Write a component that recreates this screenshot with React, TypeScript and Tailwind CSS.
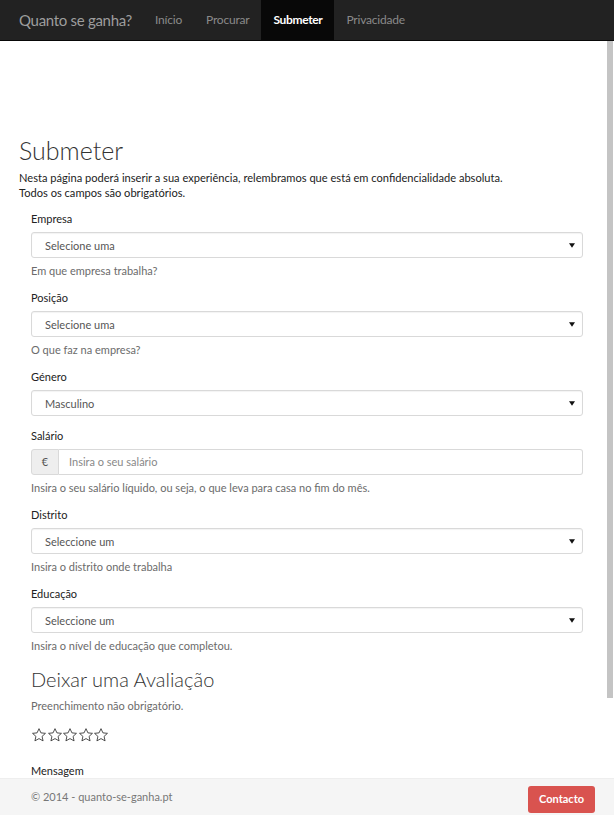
import React from "react";

const Caret = () => (
  <svg width="6" height="5" viewBox="0 0 6 5" className="absolute right-[7px] top-[10px]">
    <path d="M0 0.3 L6 0.3 L3 4.8 Z" fill="#111" />
  </svg>
);

const Select = ({ value }: { value: string }) => (
  <div className="relative h-[26px] w-full rounded-[3px] border border-[#d9d9d9] bg-white shadow-[inset_0_1px_1px_rgba(0,0,0,0.05)]">
    <div className="pl-[13px] pt-[4px] text-[11px] leading-[17px] text-[#555]">{value}</div>
    <Caret />
  </div>
);

const Field = ({
  label,
  children,
  help,
}: {
  label: string;
  children: React.ReactNode;
  help?: string;
}) => (
  <div className="mb-[11px]">
    <div className="mb-[5px] text-[11px] leading-[17px] text-[#222]">{label}</div>
    {children}
    {help && (
      <div className="mt-[5px] text-[11px] leading-[15px] text-[#6b6b6b]">{help}</div>
    )}
  </div>
);

const Star = () => (
  <svg width="16" height="16" viewBox="0 0 24 24" className="-mr-[0.5px]">
    <path
      d="M12 2.5l2.9 6.3 6.8.7-5.1 4.6 1.5 6.7L12 17.4 5.9 20.8l1.5-6.7-5.1-4.6 6.8-.7z"
      fill="none"
      stroke="#333"
      strokeWidth="1.3"
      strokeLinejoin="miter"
    />
  </svg>
);

export default function App() {
  const navItems = ["Início", "Procurar", "Submeter", "Privacidade"];
  return (
    <div className="min-h-[815px] bg-white font-['Lato','Open_Sans',sans-serif] text-[#222]">
      <nav className="flex h-[41px] items-stretch border-b border-[#080808] bg-[#222]">
        <div className="flex items-center pl-[19px] pr-[11px] text-[15px] tracking-[-0.3px] text-[#9d9d9d]">
          Quanto se ganha?
        </div>
        {navItems.map((n) => (
          <div
            key={n}
            className={
              n === "Submeter"
                ? "flex items-center bg-[#080808] px-[12px] text-[12px] tracking-[-0.35px] font-bold text-white"
                : "flex items-center px-[12px] text-[12px] tracking-[-0.2px] text-[#8a8a8a]"
            }
          >
            {n}
          </div>
        ))}
      </nav>

      <main className="px-[19px] pt-[94px] pb-[120px]">
        <h1 className="text-[25px] font-light leading-[30px] text-[#333]">Submeter</h1>
        <p className="mt-[5px] text-[11.1px] leading-[15px] text-[#222]">
          Nesta página poderá inserir a sua experiência, relembramos que está em confidencialidade absoluta.
          <br />
          Todos os campos são obrigatórios.
        </p>
        <div className="mt-[10px] w-[564px] pl-[12px]">
          <Field label="Empresa" help="Em que empresa trabalha?">
            <Select value="Selecione uma" />
          </Field>
          <Field label="Posição" help="O que faz na empresa?">
            <Select value="Selecione uma" />
          </Field>
          <Field label="Género">
            <Select value="Masculino" />
          </Field>
          <Field
            label="Salário"
            help="Insira o seu salário líquido, ou seja, o que leva para casa no fim do mês."
          >
            <div className="flex h-[26px] w-full">
              <div className="flex w-[28px] items-center justify-center rounded-l-[3px] border border-[#d9d9d9] bg-[#eee] text-[11px] text-[#555]">
                €
              </div>
              <div className="flex flex-1 items-center rounded-r-[3px] border border-l-0 border-[#d9d9d9] pl-[10px] text-[11px] text-[#888]">
                Insira o seu salário
              </div>
            </div>
          </Field>
          <Field label="Distrito" help="Insira o distrito onde trabalha">
            <Select value="Seleccione um" />
          </Field>
          <Field label="Educação" help="Insira o nível de educação que completou.">
            <Select value="Seleccione um" />
          </Field>
          <h2 className="mt-[14px] text-[20px] font-light leading-[24px] text-[#333]">
            Deixar uma Avaliação
          </h2>
          <p className="mt-[6px] text-[11px] leading-[17px] text-[#6b6b6b]">
            Preenchimento não obrigatório.
          </p>
          <div className="mt-[13px] flex">
            <Star />
            <Star />
            <Star />
            <Star />
            <Star />
          </div>
          <div className="mt-[19px] text-[11px] leading-[17px] text-[#222]">Mensagem</div>
          <div className="mt-[5px] h-[80px] w-full rounded-[3px] border border-[#d9d9d9]" />
        </div>
      </main>

      <footer className="fixed bottom-0 left-0 right-0 flex h-[37px] items-center justify-between border-t border-[#eee] bg-[#f5f5f5] pl-[31px] pr-[19px]">
        <span className="text-[11px] text-[#777]">© 2014 - quanto-se-ganha.pt</span>
        <button className="mt-[4px] h-[27px] rounded-[3px] bg-[#d9534f] px-[11px] text-[11px] font-bold text-white">
          Contacto
        </button>
      </footer>

      <div className="fixed right-[1px] top-[41px] h-[657px] w-[6px] bg-[#c4c4c4]" />
    </div>
  );
}
